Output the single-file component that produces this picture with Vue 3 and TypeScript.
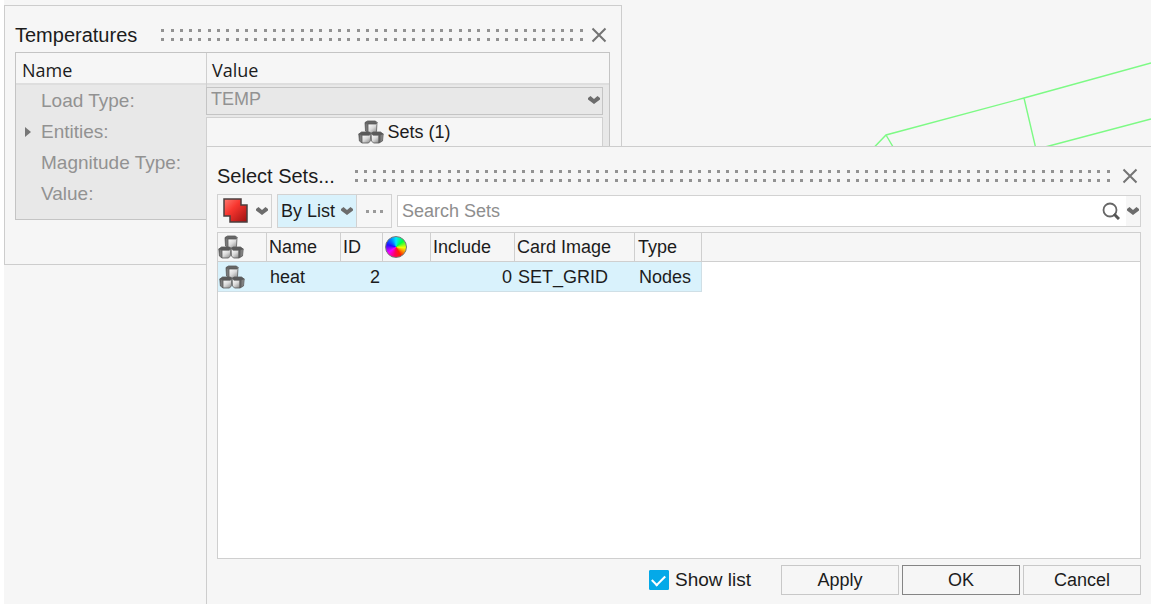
<script setup lang="ts">
import { ref } from 'vue'

interface SetRow {
  name: string
  id: number
  include: number
  cardImage: string
  type: string
}

const rows: SetRow[] = [{ name: 'heat', id: 2, include: 0, cardImage: 'SET_GRID', type: 'Nodes' }]
const search = ref('')
const showList = ref(true)
const loadType = ref('TEMP')
</script>

<template>
  <main class="desktop">
    <svg class="defs" aria-hidden="true">
      <defs>
        <linearGradient id="face-light" x1="0.2" y1="0" x2="0.9" y2="1">
          <stop offset="0" stop-color="#ffffff" />
          <stop offset="0.5" stop-color="#dadada" />
          <stop offset="1" stop-color="#8a8a8a" />
        </linearGradient>
        <linearGradient id="face-dark" x1="0" y1="0" x2="1" y2="0">
          <stop offset="0" stop-color="#5a5a5a" />
          <stop offset="1" stop-color="#9a9a9a" />
        </linearGradient>
        <linearGradient id="red-fill" x1="0" y1="0" x2="1" y2="1">
          <stop offset="0" stop-color="#ff7a70" />
          <stop offset="0.4" stop-color="#f8362f" />
          <stop offset="1" stop-color="#9c1010" />
        </linearGradient>
        <symbol id="cubes" viewBox="0 0 26 24">
          <g stroke="#5c5c5c" stroke-width="0.8" stroke-linejoin="round">
            <path d="M7 2.500 9.500 1h8l1.500 1.500-1 1.500H10z" fill="#666" />
            <path d="M7 2.500 10 4v9L7.500 11z" fill="url(#face-dark)" />
            <path d="M10 4h8l1-1.500-.5 9-1.500 1.500h-7z" fill="url(#face-light)" />
            <path d="M.8 14 3.500 12h8l1.300 1.500-1.300 1.700H4z" fill="#5a5a5a" />
            <path d="M.8 14 4 15.200V23l-2.600-2z" fill="url(#face-dark)" />
            <path d="M4 15.200h7.500l1.300-1.700-.5 7.500L10.500 23H4z" fill="url(#face-light)" />
            <path d="M13.200 13.500 15 12h7.500l2.700 2-3 1.200H14.500z" fill="#5a5a5a" />
            <path d="M13.200 13.500 15 15.200h6V23h-5.500l-2-2z" fill="url(#face-light)" />
            <path d="M21 15.200 25.200 14l-.7 7-3.500 2z" fill="url(#face-dark)" />
          </g>
        </symbol>
        <symbol id="chevron" viewBox="0 0 12 8">
          <path d="M0 2 2.500 0 6 3 9.500 0 12 2v1.500L6 8 0 3.500z" fill="#6c6c6c" />
        </symbol>
        <symbol id="cross" viewBox="0 0 16 16">
          <path d="M1.500 1.500l13 13M14.500 1.500l-13 13" fill="none" stroke="#747474" stroke-width="2" />
        </symbol>
      </defs>
    </svg>

    <svg class="mesh" width="291" height="110" viewBox="0 0 291 110" aria-hidden="true">
      <path
        d="M0 112 26 85 164 48 291 13M26 85 42 112M164 48 179 112M170 101 291 69"
        fill="none"
        stroke="#7dfa85"
        stroke-width="1.4"
      />
    </svg>

    <section class="window temperatures" aria-labelledby="temp-title">
      <header class="titlebar">
        <h1 id="temp-title">Temperatures</h1>
        <div class="grip" aria-hidden="true"><i v-for="n in 46" :key="n"></i></div>
        <button class="close" type="button" aria-label="Close Temperatures">
          <svg width="16" height="16"><use href="#cross" /></svg>
        </button>
      </header>
      <div class="props">
        <div class="props-head">
          <span>Name</span>
          <span>Value</span>
        </div>
        <div class="prop">
          <label for="load-type">Load Type:</label>
          <div class="combo">
            <select id="load-type" v-model="loadType" disabled>
              <option>TEMP</option>
            </select>
            <svg class="combo-arrow" width="12" height="8"><use href="#chevron" /></svg>
          </div>
        </div>
        <div class="prop">
          <label for="entities">
            <svg class="expander" width="6" height="10" viewBox="0 0 6 10"><path d="M0 0l6 5-6 5z" fill="#777" /></svg>
            Entities:
          </label>
          <button id="entities" class="entity" type="button">
            <svg width="26" height="24"><use href="#cubes" /></svg>
            Sets (1)
          </button>
        </div>
        <div class="prop"><span class="key">Magnitude Type:</span></div>
        <div class="prop"><span class="key">Value:</span></div>
      </div>
    </section>

    <section class="window select-sets" aria-labelledby="sets-title">
      <header class="titlebar">
        <h2 id="sets-title">Select Sets...</h2>
        <div class="grip" aria-hidden="true"><i v-for="n in 82" :key="n"></i></div>
        <button class="close" type="button" aria-label="Close Select Sets">
          <svg width="16" height="16"><use href="#cross" /></svg>
        </button>
      </header>

      <div class="toolbar">
        <button class="tool mode" type="button" aria-label="Selection mode">
          <svg width="26" height="26" viewBox="0 0 26 26">
            <path d="M1 1h17v6h6v17H7v-6H1z" fill="url(#red-fill)" stroke="#4a3f3f" stroke-width="1.500" />
          </svg>
          <svg width="12" height="8"><use href="#chevron" /></svg>
        </button>
        <div class="group">
          <button class="tool by-list" type="button">
            By List
            <svg width="12" height="8"><use href="#chevron" /></svg>
          </button>
          <button class="tool more" type="button" aria-label="More options">
            <svg width="17" height="3" viewBox="0 0 17 3">
              <path d="M0 0h3v3H0zM7 0h3v3H7zM14 0h3v3h-3z" fill="#9a9a9a" />
            </svg>
          </button>
        </div>
        <div class="search">
          <input v-model="search" type="text" placeholder="Search Sets" aria-label="Search Sets" />
          <button type="button" class="find" aria-label="Search">
            <svg width="18" height="18" viewBox="0 0 18 18">
              <circle cx="8" cy="8" r="6.500" fill="none" stroke="#666" stroke-width="1.800" />
              <path d="M12 12l5 5" stroke="#555" stroke-width="3" />
            </svg>
          </button>
          <button type="button" class="find-menu" aria-label="Search options">
            <svg width="12" height="8"><use href="#chevron" /></svg>
          </button>
        </div>
      </div>

      <div class="list">
        <table>
          <thead>
            <tr>
              <th class="c-icon" aria-label="Entity"><svg width="26" height="24"><use href="#cubes" /></svg></th>
              <th class="c-name">Name</th>
              <th class="c-id">ID</th>
              <th class="c-color" aria-label="Color"><span class="wheel"></span></th>
              <th class="c-include">Include</th>
              <th class="c-card">Card Image</th>
              <th class="c-type">Type</th>
              <th class="c-rest"></th>
            </tr>
          </thead>
          <tbody>
            <tr v-for="row in rows" :key="row.id">
              <td><svg width="26" height="24"><use href="#cubes" /></svg></td>
              <td>{{ row.name }}</td>
              <td class="num">{{ row.id }}</td>
              <td></td>
              <td class="num">{{ row.include }}</td>
              <td>{{ row.cardImage }}</td>
              <td class="last">{{ row.type }}</td>
              <td class="blank"></td>
            </tr>
          </tbody>
        </table>
      </div>

      <footer class="actions">
        <label class="check"><input v-model="showList" type="checkbox" />Show list</label>
        <button type="button">Apply</button>
        <button type="button" class="primary">OK</button>
        <button type="button">Cancel</button>
      </footer>
    </section>
  </main>
</template>

<style>
body {
  background: #fff;
}
</style>

<style scoped>
* {
  box-sizing: border-box;
}
.desktop {
  position: relative;
  height: 100vh;
  margin-left: 4px;
  overflow: hidden;
  background: #f6f6f6;
  color: #1c1c1c;
  font: 18px/22px "Liberation Sans", Arial, sans-serif;
}
.defs {
  position: absolute;
  width: 0;
  height: 0;
}
.mesh {
  position: absolute;
  top: 50px;
  right: 0;
}
svg {
  display: block;
  flex: none;
}
button,
input,
select {
  margin: 0;
  padding: 0;
  border: 0;
  border-radius: 0;
  background: none;
  color: inherit;
  font: inherit;
}
.window {
  position: absolute;
  border: 1px solid #cdcdcd;
  background: #f6f6f6;
}
.temperatures {
  top: 5px;
  left: 0;
  width: 618px;
  padding: 12px 11px 44px 10px;
}
.select-sets {
  top: 146px;
  left: 202px;
  right: 0;
  bottom: 0;
  display: flex;
  flex-direction: column;
  padding: 14px 10px 9px;
  border-right: 0;
  border-bottom: 0;
}
.titlebar {
  display: flex;
  align-items: center;
  height: 30px;
}
h1,
h2 {
  margin: 0;
  font-size: 20px;
  font-weight: 400;
  line-height: 24px;
}
.grip {
  display: flex;
  flex: 1;
  justify-content: space-between;
  margin: 0 12px 0 20px;
}
.grip i {
  width: 3px;
  height: 12px;
  border: solid #929292;
  border-width: 3px 0;
}
.temperatures .titlebar {
  height: 34px;
}
.temperatures .grip {
  margin: 0 8px 0 24px;
}
.close {
  padding: 0 3px 0 0;
}
.props {
  border: 1px solid #c4c4c4;
  background: #e8e8e8;
  padding-bottom: 10px;
}
.props-head {
  display: grid;
  grid-template-columns: 190px 1fr;
  height: 32px;
  border-bottom: 2px solid #dedede;
  background: #f6f6f6;
  font: 18px/34px "Open Sans", "Noto Sans", sans-serif;
}
.props-head span {
  padding-left: 6px;
}
.props-head span + span {
  padding-left: 5px;
  border-left: 1px solid #cfcfcf;
}
.prop {
  display: grid;
  grid-template-columns: 190px 1fr;
  align-items: center;
  height: 31px;
  padding-right: 6px;
  color: #929292;
}
.prop label,
.key {
  position: relative;
  padding-left: 25px;
  font-size: 19px;
  line-height: 30px;
  white-space: nowrap;
}
.expander {
  position: absolute;
  left: 9px;
  top: 10px;
}
.combo {
  position: relative;
}
.combo select {
  display: block;
  width: 100%;
  height: 28px;
  padding: 0 20px 3px 4px;
  border: 1px solid #c4c4c4;
  appearance: none;
  color: #929292;
  opacity: 1;
}
.combo-arrow {
  position: absolute;
  right: 3px;
  top: 9px;
}
.entity {
  display: flex;
  align-items: center;
  justify-content: center;
  gap: 3px;
  height: 30px;
  border: 1px solid #d0d0d0;
  background: #f6f6f6;
  color: #1c1c1c;
}
.toolbar {
  display: flex;
  align-items: center;
  gap: 5px;
  margin-top: 3px;
}
.tool {
  display: flex;
  align-items: center;
  justify-content: center;
  height: 34px;
  border: 1px solid #d2d2d2;
}
.mode {
  width: 55px;
  padding-left: 2px;
  gap: 7px;
}
.group {
  display: flex;
}
.by-list {
  width: 80px;
  gap: 6px;
  background: #d9f2fc;
}
.more {
  width: 35px;
  border-left: 0;
}
.search {
  display: flex;
  flex: 1;
  height: 32px;
  border: 1px solid #d2d2d2;
  background: #fff;
}
.search input {
  flex: 1;
  min-width: 0;
  padding-left: 4px;
}
.search input::placeholder {
  color: #8e8e8e;
  opacity: 1;
}
.find {
  padding: 0 6px;
}
.find-menu {
  padding: 0 1px;
  background: #f6f6f6;
}
.list {
  flex: 1;
  min-height: 0;
  margin-top: 4px;
  border: 1px solid #cfcfcf;
  background: #fff;
}
table {
  width: 100%;
  table-layout: fixed;
  border-collapse: separate;
  border-spacing: 0;
}
th,
td {
  height: 29px;
  padding: 0 0 0 2px;
  font-weight: 400;
  text-align: left;
  white-space: nowrap;
}
th {
  border-right: 1px solid #cfcfcf;
  border-bottom: 1px solid #cfcfcf;
  background: #f6f6f6;
}
td {
  height: 30px;
  border-bottom: 1px solid #cfdfe6;
  background: #d9f2fc;
  padding-left: 3px;
}
th:first-child {
  padding-left: 0;
}
td:first-child {
  padding-left: 1px;
}
td.num {
  padding: 0 3px 0 0;
  text-align: right;
}
td.last {
  padding-left: 4px;
  border-right: 1px solid #cfdfe6;
}
td.blank {
  border: 0;
  background: #fff;
}
.c-icon { width: 49px; }
.c-name { width: 74px; }
.c-id { width: 42px; }
.c-color { width: 48px; }
.c-include { width: 84px; }
.c-card { width: 120px; }
.c-type { width: 67px; padding-left: 3px; }
.c-rest { border-right: 0; }
.wheel {
  display: block;
  width: 22px;
  height: 22px;
  border: 1px solid #777;
  border-radius: 50%;
  background: conic-gradient(#00e8ff, #00ff40 50deg, #f4ff00 95deg, #ff2000 150deg, #ff0060 190deg, #f000ff 235deg, #2010ff 285deg, #0080ff 325deg, #00e8ff);
}
.actions {
  display: flex;
  align-items: center;
  justify-content: flex-end;
  gap: 3px;
  margin-top: 6px;
}
.actions button {
  width: 118px;
  height: 30px;
  border: 1px solid #c8c8c8;
}
.actions .primary {
  border-color: #858585;
}
.check {
  display: flex;
  align-items: center;
  gap: 6px;
  margin-right: 27px;
  font-size: 19px;
}
.check input {
  display: grid;
  place-items: center;
  width: 20px;
  height: 20px;
  appearance: none;
  border: 1px solid #b0b0b0;
  border-radius: 1px;
  background: #fff;
}
.check input:checked {
  border-color: #04a9e8;
  background: #04a9e8;
}
.check input:checked::after {
  content: "";
  width: 11px;
  height: 6px;
  margin-bottom: 3px;
  border: solid #fff;
  border-width: 0 0 2px 2px;
  transform: rotate(-45deg);
}
</style>
